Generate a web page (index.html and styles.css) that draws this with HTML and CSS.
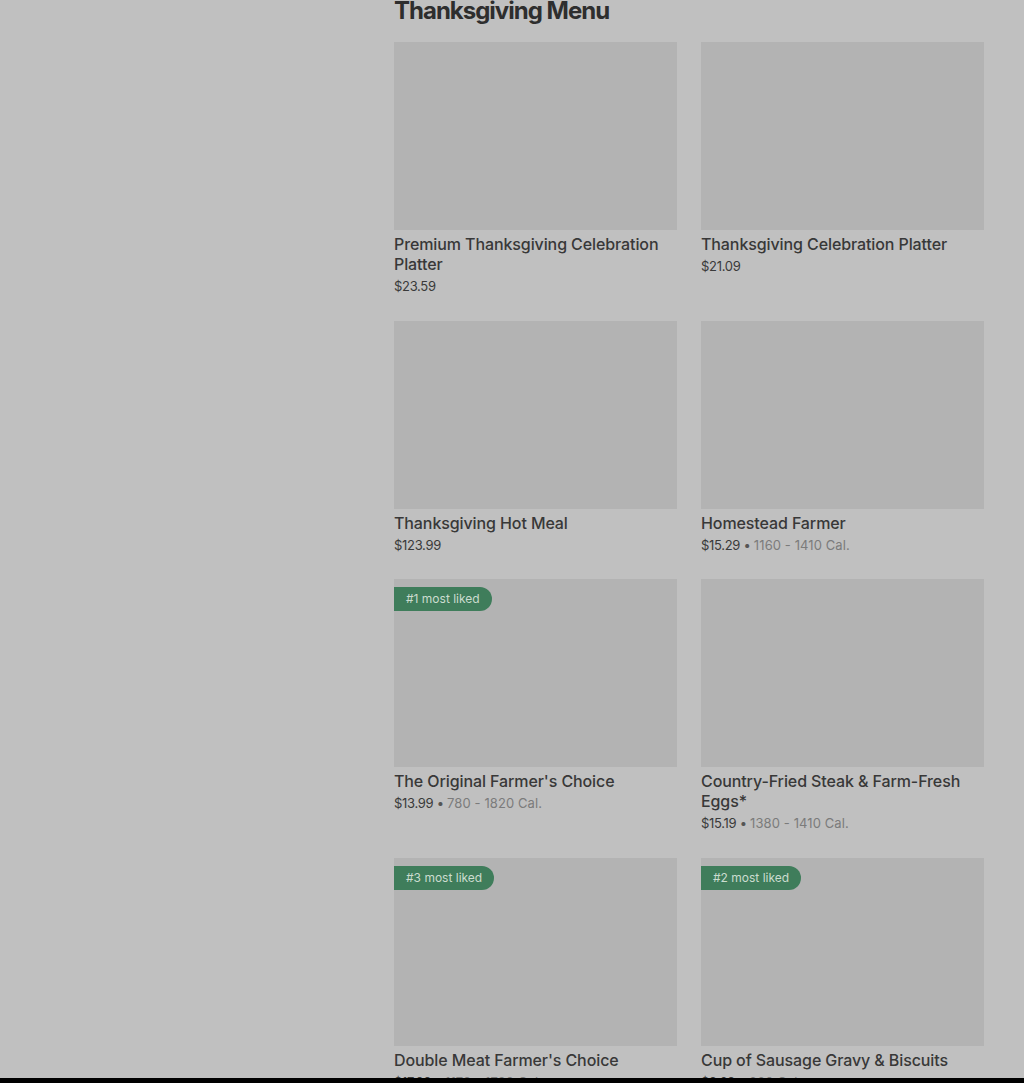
FILE: index.html
```html
<!DOCTYPE html>
<html lang="en">
<head>
    <meta charset="UTF-8">
    <meta name="viewport" content="width=device-width, initial-scale=1.0">
    <title>Thanksgiving Menu</title>
    <link rel="stylesheet" href="styles.css">
</head>
<body>
    <main class="menu">
        <h1>Thanksgiving Menu</h1>
        <div class="grid">
            <div class="item">
                <div class="photo"></div>
                <h2>Premium Thanksgiving Celebration Platter</h2>
                <p class="meta">$23.59</p>
            </div>
            <div class="item">
                <div class="photo"></div>
                <h2>Thanksgiving Celebration Platter</h2>
                <p class="meta">$21.09</p>
            </div>
            <div class="item">
                <div class="photo"></div>
                <h2>Thanksgiving Hot Meal</h2>
                <p class="meta">$123.99</p>
            </div>
            <div class="item">
                <div class="photo"></div>
                <h2>Homestead Farmer</h2>
                <p class="meta">$15.29 <span class="dot">•</span> <span class="cal">1160 - 1410 Cal.</span></p>
            </div>
            <div class="item">
                <div class="photo"><span class="badge">#1 most liked</span></div>
                <h2>The Original Farmer's Choice</h2>
                <p class="meta">$13.99 <span class="dot">•</span> <span class="cal">780 - 1820 Cal.</span></p>
            </div>
            <div class="item">
                <div class="photo"></div>
                <h2>Country-Fried Steak &amp; Farm-Fresh Eggs*</h2>
                <p class="meta">$15.19 <span class="dot">•</span> <span class="cal">1380 - 1410 Cal.</span></p>
            </div>
            <div class="item">
                <div class="photo"><span class="badge">#3 most liked</span></div>
                <h2>Double Meat Farmer's Choice</h2>
                <p class="meta">$17.99 <span class="dot">•</span> <span class="cal">1170 - 1720 Cal.</span></p>
            </div>
            <div class="item">
                <div class="photo"><span class="badge">#2 most liked</span></div>
                <h2>Cup of Sausage Gravy &amp; Biscuits</h2>
                <p class="meta">$9.69 <span class="dot">•</span> <span class="cal">660 Cal.</span></p>
            </div>
        </div>
    </main>
    <div class="bottom-bar"></div>
</body>
</html>
```

FILE: styles.css
```css
* {
    box-sizing: border-box;
    margin: 0;
    padding: 0;
}

body {
    font-family: Inter, "Noto Sans", sans-serif;
    color: #333;
    background-color: #c0c0c0;
    overflow: hidden;
    height: 1083px;
}

.menu {
    width: 590px;
    margin-left: 394px;
    margin-top: -4px;
}

h1 {
    font-size: 24px;
    line-height: 30px;
    font-weight: 700;
    letter-spacing: -1px;
    color: #2e2e2e;
}

.grid {
    display: grid;
    grid-template-columns: 283px 283px;
    column-gap: 24px;
    margin-top: 16px;
}

.item {
    margin-bottom: 24.5px;
}

.photo {
    position: relative;
    height: 188px;
    background-color: #b3b3b3;
}

.badge {
    position: absolute;
    top: 8px;
    left: 0;
    height: 24px;
    padding: 0 12px;
    line-height: 24px;
    font-size: 12px;
    color: #cbdccf;
    background-color: #3f7d5b;
    border-radius: 0 12px 12px 0;
}

.item h2 {
    margin-top: 4px;
    font-size: 16px;
    line-height: 20px;
    font-weight: 500;
    color: #383838;
    letter-spacing: -0.1px;
}

.meta {
    margin-top: 2px;
    font-size: 13px;
    line-height: 20px;
    color: #3a3a3a;
    letter-spacing: -0.3px;
}

.dot {
    color: #555;
}

.cal {
    color: #7b7b7b;
    letter-spacing: 0.1px;
}

.bottom-bar {
    position: fixed;
    left: 0;
    right: 0;
    bottom: 0;
    height: 5px;
    background-color: #000;
}
```
